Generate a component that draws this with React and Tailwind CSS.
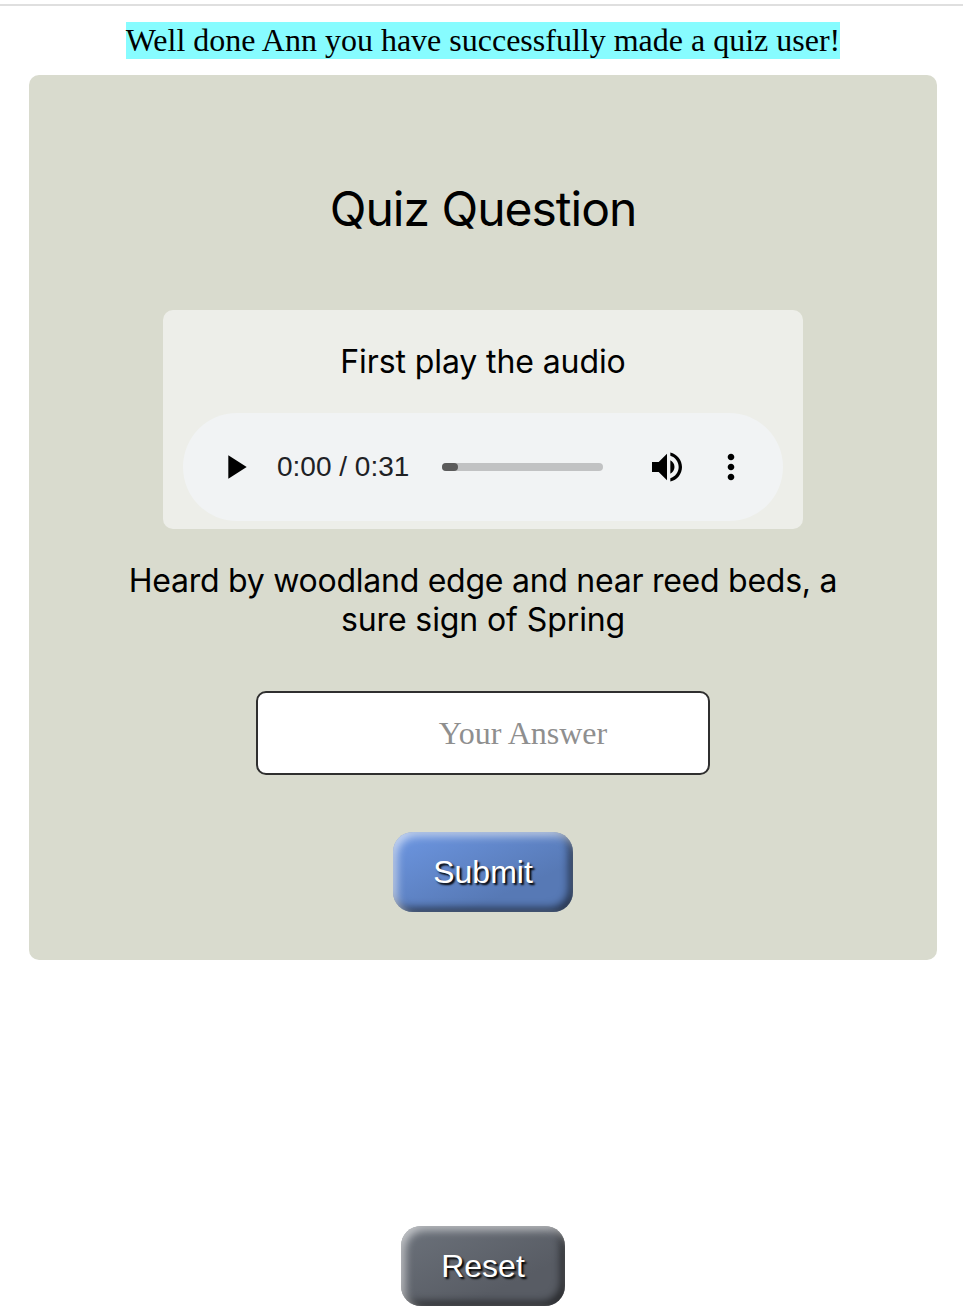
function AudioPlayer() {
  return (
    <div className="flex h-[108px] w-[600px] items-center rounded-full bg-[#f1f3f4] pl-8">
      <svg viewBox="0 0 24 24" className="size-10 shrink-0">
        <path d="M8 5v14l11-7z" />
      </svg>
      <span className="ml-[22px] w-[165px] shrink-0 whitespace-nowrap font-['Liberation_Sans',sans-serif] text-[28px] leading-8 text-[#202124]">
        0:00 / 0:31
      </span>
      <div className="h-2 w-[161px] shrink-0 rounded-full bg-[#c1c2c3]">
        <div className="h-2 w-4 rounded-full bg-[#5b5b5b]" />
      </div>
      <svg viewBox="0 0 24 24" className="ml-11 size-10 shrink-0">
        <path d="M3 9v6h4l5 5V4L7 9H3zm13.5 3c0-1.77-1.02-3.29-2.5-4.03v8.05c1.48-.73 2.5-2.25 2.5-4.02zM14 3.23v2.06c2.89.86 5 3.54 5 6.71s-2.11 5.85-5 6.71v2.06c4.01-.91 7-4.49 7-8.77s-2.99-7.86-7-8.77z" />
      </svg>
      <svg viewBox="0 0 24 24" className="ml-6 size-10 shrink-0">
        <path d="M12 8c1.1 0 2-.9 2-2s-.9-2-2-2-2 .9-2 2 .9 2 2 2zm0 2c-1.1 0-2 .9-2 2s.9 2 2 2 2-.9 2-2-.9-2-2-2zm0 6c-1.1 0-2 .9-2 2s.9 2 2 2 2-.9 2-2-.9-2-2-2z" />
      </svg>
    </div>
  );
}

export default function App() {
  return (
    <div className="flex h-[1311px] w-[963px] flex-col items-center overflow-hidden bg-white pl-[3px] pt-1 text-black">
      <hr className="-ml-[3px] h-0.5 w-[963px] shrink-0 border-0 bg-[#dfdfdf]" />
      <p className="mt-4 h-[37px] shrink-0 whitespace-nowrap bg-[#87fcff] font-['Liberation_Serif',serif] text-[32px] leading-[37px]">
        Well done Ann you have successfully made a quiz user!
      </p>
      <main className="mt-4 flex h-[885px] w-[908px] shrink-0 flex-col items-center rounded-[10px] bg-[#d9dbce] pt-[105px] font-['Inter',sans-serif]">
        <h1 className="h-[58px] text-[48px] leading-[58px] tracking-[-1px]">Quiz Question</h1>
        <section className="mt-[72px] flex h-[219px] w-[640px] flex-col items-center rounded-[10px] bg-[#edeee9] pt-8">
          <p className="mb-8 h-[39px] text-[32px] leading-[39px] tracking-[-0.1px]">First play the audio</p>
          <AudioPlayer />
        </section>
        <p className="mt-8 w-[740px] text-center text-[32px] leading-[39px]">
          <span className="tracking-[-0.26px]">Heard by woodland edge and near reed beds, a </span>
          <span className="tracking-[-0.1px]">sure sign of Spring</span>
        </p>
        <input
          type="text"
          placeholder="Your Answer"
          className="mt-[52px] h-[84px] w-[454px] shrink-0 rounded-[10px] border-2 border-[#2f2f2f] bg-white pl-20 text-center font-['Liberation_Serif',serif] text-[32px] outline-none placeholder:text-[#8f8f8f]"
        />
        <button className="mt-[57px] h-20 w-[180px] shrink-0 rounded-[20px] bg-[linear-gradient(to_bottom_right,#6d97e3_0%,#5779b5_70%,#5779b5_100%)] font-['Liberation_Sans',sans-serif] text-[32px] text-white shadow-[inset_4px_4px_8px_rgba(255,255,255,0.6),inset_-4px_-4px_8px_rgba(0,0,0,0.6)] [text-shadow:2px_2px_2px_#000]">
          Submit
        </button>
      </main>
      <button className="mt-[266px] h-20 w-[164px] shrink-0 rounded-[20px] bg-[linear-gradient(to_bottom_right,#6c727b_0%,#585c64_70%,#585c64_100%)] font-['Liberation_Sans',sans-serif] text-[32px] text-white shadow-[inset_4px_4px_8px_rgba(255,255,255,0.6),inset_-4px_-4px_8px_rgba(0,0,0,0.6)] [text-shadow:2px_2px_2px_#000]">
        Reset
      </button>
    </div>
  );
}
